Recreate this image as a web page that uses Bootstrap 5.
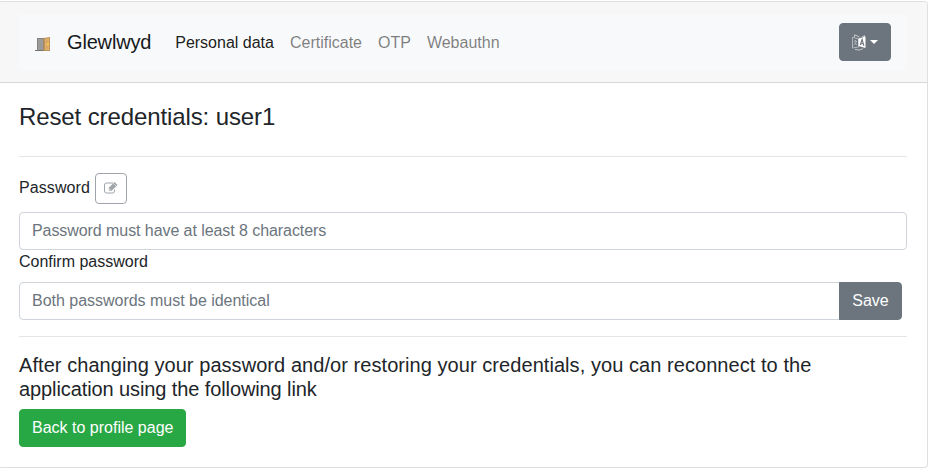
<!DOCTYPE html>
<html lang="en">
<head>
<meta charset="utf-8">
<meta name="viewport" content="width=device-width, initial-scale=1">
<title>Glewlwyd</title>
<link href="https://cdn.jsdelivr.net/npm/bootstrap@5.3.0/dist/css/bootstrap.min.css" rel="stylesheet">
<style>
body { font-family: "Liberation Sans", Arial, sans-serif; font-size: 16px; line-height: 1.5; color: #212529; overflow: hidden; }
.profile-card { width: 930px; margin: 1px 0 0 -2px; border: 1px solid rgba(0,0,0,.125); border-radius: 4px; }
.profile-card .card-header { padding: 12px 20px; background: #f7f7f7; border-bottom: 1px solid rgba(0,0,0,.125); }
.profile-card .card-body { padding: 20px; color: #212529; }
.profile-nav { padding: 8px 16px; background: #f8f9fa !important; height: 56px; }
.profile-nav .navbar-brand { font-size: 20px; line-height: 30px; padding: 4px 0; margin-right: 16px; color: #16191c; letter-spacing: -.17px; }
.profile-nav .nav-link { padding: 9px 8px 7px; color: rgba(0,0,0,.5); }
.profile-nav .nav-link.active { color: rgba(0,0,0,.9); }
.btn, .form-control { border-radius: 4px; }
.btn-secondary { --bs-btn-bg: #6c757d; --bs-btn-border-color: #6c757d; }
.btn-success { --bs-btn-bg: #28a745; --bs-btn-border-color: #28a745; }
.form-control { border-color: #ced4da; height: 38px; }
.form-control::placeholder { color: #6c757d; opacity: 1; }
#pw::placeholder { letter-spacing: -.07px; }
#confirm::placeholder { letter-spacing: -.02px; }
.pw-label { flex: 0 0 71px; white-space: nowrap; letter-spacing: .1px; }
.edit-btn { width: 32px; height: 31px; padding: 0 0 1px; margin-left: 5px; }
.lang-btn { width: 52px; height: 38px; padding: 0; }
.lang-btn::after { margin-left: 4px; }
.save-group { width: 883px; }
.save-btn { width: 63px; padding-left: 0; padding-right: 0; }
hr { border-top: 1px solid rgba(0,0,0,.1); opacity: 1; margin: 16px 0; }
.page-title { font-size: 24px; font-weight: 500; line-height: 1.2; letter-spacing: -.11px; margin-bottom: 24px; }
.page-note { font-size: 20px; font-weight: 500; line-height: 1.2; letter-spacing: .06px; }
.note-end { letter-spacing: -.1px; }
</style>
</head>
<body>
<div class="card profile-card">
  <div class="card-header">
    <nav class="navbar navbar-expand bg-light profile-nav">
      <a class="navbar-brand" href="#" aria-label="Home"><svg class="d-block mt-1" width="16" height="16" viewBox="0 0 16 16">
        <path d="M0 15h9v-1H0z" fill="#77716e"/>
        <path d="M2 2h7v12H2z" fill="#88807a"/>
        <path d="M3 3h5v11H3z" fill="#9b9b9b"/>
        <path d="M8.500 2 15 1v14H8.500z" fill="#c0925a"/>
        <path d="M10 3 14 2v12h-4z" fill="#e0b16c"/>
        <path d="M11 4h1.500v3H11zM11 10h1.500v3H11z" fill="#d6a560"/>
        <path d="M12 7.500h2v1.500h-2z" fill="#fccb3e"/>
      </svg></a>
      <a class="navbar-brand me-3" href="#">Glewlwyd</a>
      <ul class="navbar-nav me-auto">
        <li class="nav-item"><a class="nav-link active" href="#">Personal data</a></li>
        <li class="nav-item"><a class="nav-link" href="#">Certificate</a></li>
        <li class="nav-item"><a class="nav-link" href="#">OTP</a></li>
        <li class="nav-item"><a class="nav-link" href="#">Webauthn</a></li>
      </ul>
      <button class="btn btn-secondary dropdown-toggle lang-btn d-flex align-items-center justify-content-center" type="button" aria-label="Language">
        <svg width="14" height="17" viewBox="0 0 14 17" fill="none">
          <path d="M.5 3.200 6.500 5v8L.5 14z" stroke="#c3c8cb" stroke-width=".8"/>
          <path d="M2.500 3V.8l5 2.200M10 3l2.500-1.500v1.500M3 15.300q4 2 8-.6" stroke="#c3c8cb"/>
          <path d="M2 7l3 .5M3.500 6v1.300M4.600 7.500 2 11.500M2.500 8.500l2.500 2.500" stroke="#c3c8cb" stroke-width=".7"/>
          <path d="M6.500 4.500 13.500 2.500V14L6.500 12z" fill="#fff"/>
          <path d="m8.300 11 1.800-5.500 1.800 6.300M8.900 9.500l2.400.3" stroke="#6c757d" stroke-width="1.100"/>
        </svg>
      </button>
    </nav>
  </div>
  <div class="card-body">
    <h4 class="page-title">Reset credentials: user1</h4>
    <hr>
    <div class="d-flex align-items-center mb-2">
      <label class="pw-label" for="pw">Password</label>
      <button class="btn btn-outline-secondary btn-sm edit-btn d-flex align-items-center justify-content-center" id="edit" type="button" disabled aria-label="Edit">
        <svg width="14" height="12" viewBox="0 0 14 12" fill="none">
          <path d="M10.500 7.500v1.500q0 2-2 2h-6q-2 0-2-2V3q0-2 2-2H9" stroke="currentColor"/>
          <path d="M4.800 5.800 10.600 0l2.900 2.900-5.800 5.800H4.800z" fill="currentColor"/>
          <path d="M5.600 6.700v1.200h1.200M9.500 1.500l2.500 2.500" stroke="#fff" stroke-width=".6"/>
        </svg>
      </button>
    </div>
    <input class="form-control" id="pw" type="password" placeholder="Password must have at least 8 characters">
    <label class="d-block mb-2" for="confirm">Confirm password</label>
    <div class="input-group save-group">
      <input class="form-control" id="confirm" type="password" placeholder="Both passwords must be identical">
      <button class="btn btn-secondary save-btn" type="button">Save</button>
    </div>
    <hr>
    <h5 class="page-note mb-2">After changing your password and/or restoring your credentials, you can reconnect to the <span class="note-end">application using the following link</span></h5>
    <a class="btn btn-success" href="#">Back to profile page</a>
  </div>
</div>
<script src="https://cdn.jsdelivr.net/npm/bootstrap@5.3.0/dist/js/bootstrap.bundle.min.js"></script>
</body>
</html>
